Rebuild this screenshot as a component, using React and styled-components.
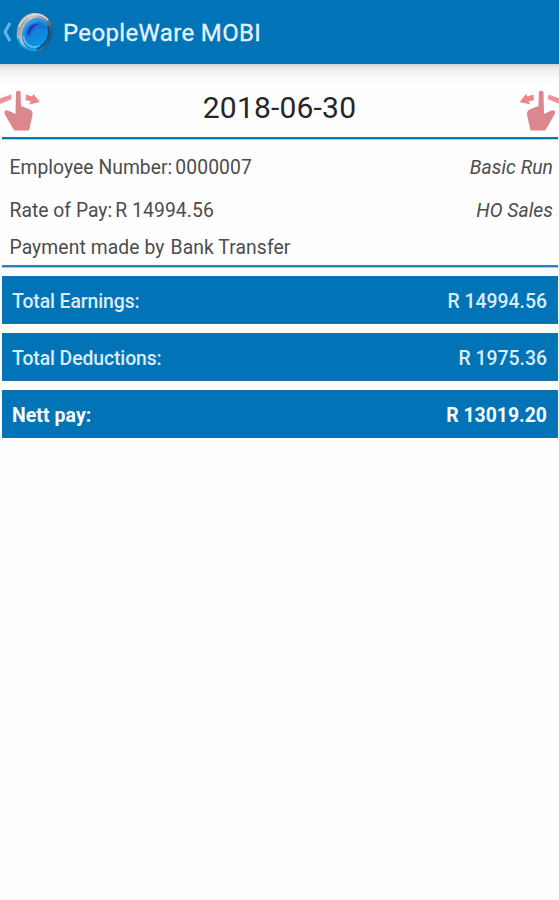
import React from "react";
import styled, { createGlobalStyle } from "styled-components";

const GlobalStyle = createGlobalStyle`
  * { box-sizing: border-box; }
  body { margin: 0; background: #fefefe; font-family: Roboto, sans-serif; }
`;

const Screen = styled.main`
  width: 559px;
  height: 900px;
  overflow: hidden;
  background: #fefefe;
`;

const AppBar = styled.header`
  display: flex;
  align-items: center;
  height: 64px;
  padding-left: 1px;
  background: #0074b7;
`;

const BackIcon = styled.svg`
  width: 13px;
  height: 24px;
  flex: none;
`;

const Logo = styled.svg`
  width: 40px;
  height: 42px;
  flex: none;
`;

const Title = styled.h1`
  margin: 2px 0 0 9px;
  font-size: 24px;
  line-height: 30px;
  font-weight: 400;
  letter-spacing: 0.35px;
  color: #e6f1fc;
  -webkit-text-stroke: 0.3px #e6f1fc;
  white-space: nowrap;
`;

const DateBar = styled.section`
  display: flex;
  justify-content: space-between;
  align-items: flex-start;
  height: 73px;
  background: linear-gradient(#cfcfd1 0, #e5e5e6 3px, #f3f3f4 8px, #fbfbfb 14px, #fefefe 19px);
`;

const SwipeIcon = styled.svg`
  width: 40px;
  height: 44px;
  margin-top: 24px;
  flex: none;
`;

const PayDate = styled.time`
  padding-top: 26px;
  font-size: 30px;
  line-height: 36px;
  letter-spacing: 0.2px;
  color: #262626;
`;

const Rule = styled.div`
  height: 3px;
  margin: 0 1px 0 2px;
  background: ${(p) => p.$fill};
`;

const Details = styled.section`
  height: 125px;
  padding: 16px 6px 0 9.5px;
`;

const DetailRow = styled.div`
  display: flex;
  justify-content: space-between;
  height: ${(p) => p.$height}px;
  font-size: 19.3px;
  line-height: 24px;
  color: #4c4c4c;
  white-space: nowrap;
`;

const Pair = styled.div`
  display: flex;
  gap: ${(p) => p.$gap}px;
`;

const Label = styled.span`
  letter-spacing: ${(p) => p.$tracking}px;
`;

const Note = styled.em`
  font-style: italic;
  letter-spacing: ${(p) => p.$tracking}px;
`;

const Totals = styled.section`
  display: flex;
  flex-direction: column;
  gap: 9px;
  padding: 8px 1px 0 2px;
`;

const TotalRow = styled.div`
  display: flex;
  justify-content: space-between;
  align-items: center;
  height: 48px;
  padding: 3px 11px 0 10px;
  background: #0074b7;
  border: 1px solid #1b6fae;
  border-width: 1px 0;
  color: ${(p) => (p.$strong ? "#fafdff" : "#dcecfa")};
  font-size: 19.4px;
  font-weight: ${(p) => (p.$strong ? 700 : 500)};
  white-space: nowrap;
`;

const TotalLabel = styled.span`
  letter-spacing: ${(p) => (p.$strong ? "0.1px" : "-0.1px")};
`;

function HandIcon({ mirrored }) {
  return (
    <SwipeIcon viewBox="0 0 40 44" aria-hidden="true">
      <g transform={mirrored ? "translate(40.5 0) scale(-1 1)" : undefined}>
        <path
          d="M16 4Q18.300 1 20.600 4L21 18L30 21.500Q33 23 32.500 27L29 42.500H14.500L11.500 38L4.500 25.500Q4 21.500 8 22.500L15.500 26Z"
          fill="#dc868d"
        />
        <path d="M0 10.500L11 6.500L11.800 11L0 16Z" fill="#ee9399" />
        <path d="M26 6.500L32 8.500L33.500 6L39.800 14L29 16.500L31 13.500L25.500 12Z" fill="#ee858c" />
      </g>
    </SwipeIcon>
  );
}

const totals = [
  { label: "Total Earnings:", amount: "R 14994.56" },
  { label: "Total Deductions:", amount: "R 1975.36" },
  { label: "Nett pay:", amount: "R 13019.20", strong: true },
];

export default function App() {
  return (
    <Screen>
      <GlobalStyle />
      <AppBar>
        <BackIcon viewBox="0 0 13 24" aria-label="Back">
          <path d="M9 3L4 12L9 21" fill="none" stroke="#61b5e7" strokeWidth="3" />
        </BackIcon>
        <Logo viewBox="14 11 40 42" aria-hidden="true">
          <defs>
            <linearGradient id="metal" x1="0" y1="0.3" x2="1" y2="0.7">
              <stop offset="0" stopColor="#8d9499" />
              <stop offset="0.3" stopColor="#c9c8c5" />
              <stop offset="0.65" stopColor="#868c90" />
              <stop offset="1" stopColor="#173e62" />
            </linearGradient>
            <linearGradient id="glass" x1="0.2" y1="0" x2="0.7" y2="1">
              <stop offset="0" stopColor="#3ba6ee" />
              <stop offset="0.5" stopColor="#1183da" />
              <stop offset="1" stopColor="#0a9df0" />
            </linearGradient>
          </defs>
          <path d="M17 38C15 22 25 12 36 13C46 13 53 22 52.500 32C51 43 44 51 36 51C28 50 20 46 17 38Z" fill="url(#metal)" />
          <path d="M22 36C22 25 30 17.500 38 18C45 18.500 50 25 49.500 33C49 43 42 50 35 50.500C27 50 22 44 22 36Z" fill="url(#glass)" />
          <path d="M26 37C24 28 31 21 41 22.500C45 24 46 26 46 29C40 27 33 30 30 37Z" fill="#1672d6" />
          <path d="M27.500 34C28 27 33 23.500 38 24C33 27 31 30 29 34.500Z" fill="#2433aa" />
          <path d="M23.500 36C24 45 32 49 40 46" fill="none" stroke="#54c0fa" strokeWidth="1.800" />
          <path d="M48 26C51 36 46 45 37 49" fill="none" stroke="#0b4f8d" strokeWidth="2" />
          <path d="M18.500 27C25 13 40 11 48 20" fill="none" stroke="#dddcd9" strokeWidth="1.500" />
          <path d="M18 39C20 46 27 51 35 50" fill="none" stroke="#12a0e6" strokeWidth="2" />
        </Logo>
        <Title>PeopleWare MOBI</Title>
      </AppBar>

      <DateBar>
        <HandIcon />
        <PayDate dateTime="2018-06-30">2018-06-30</PayDate>
        <HandIcon mirrored />
      </DateBar>
      <Rule $fill="linear-gradient(#0c76b5 2px, #a5d3ec 2px)" />

      <Details>
        <DetailRow $height={43}>
          <Pair $gap={3}>
            <Label $tracking={0.05}>Employee Number:</Label>
            <Label $tracking={0.1}>0000007</Label>
          </Pair>
          <Note $tracking={0.05}>Basic Run</Note>
        </DetailRow>
        <DetailRow $height={37}>
          <Pair $gap={3}>
            <Label $tracking={0.03}>Rate of Pay:</Label>
            <Label $tracking={0.1}>R 14994.56</Label>
          </Pair>
          <Note $tracking={0.05}>HO Sales</Note>
        </DetailRow>
        <DetailRow $height={24}>
          <Pair $gap={6}>
            <Label $tracking={0.1}>Payment made by</Label>
            <Label $tracking={0.1}>Bank Transfer</Label>
          </Pair>
        </DetailRow>
      </Details>
      <Rule $fill="linear-gradient(#2883bd 2px, #9fc9e2 2px)" />

      <Totals>
        {totals.map((row) => (
          <TotalRow key={row.label} $strong={row.strong}>
            <TotalLabel $strong={row.strong}>{row.label}</TotalLabel>
            <span>{row.amount}</span>
          </TotalRow>
        ))}
      </Totals>
    </Screen>
  );
}
